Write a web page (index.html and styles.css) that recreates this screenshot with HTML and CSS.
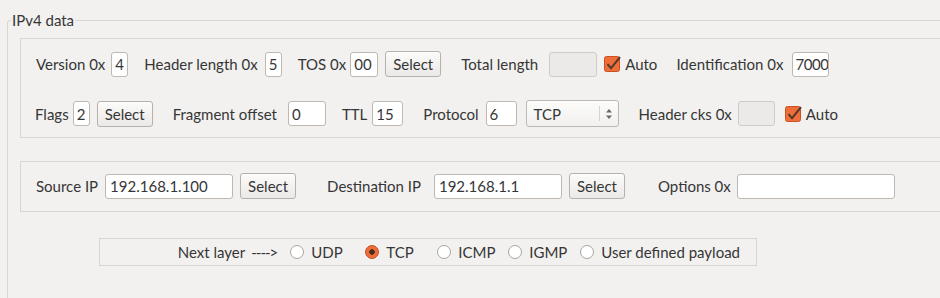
FILE: index.html
```html
<!DOCTYPE html>
<html>
<head>
<meta charset="utf-8">
<link rel="stylesheet" href="styles.css">
</head>
<body>
<div class="group">
  <span class="group-title">IPv4 data</span>

  <div class="frame frame-main">
    <div class="row row1">
      <div class="field"><span class="lbl lbl-version">Version 0x</span><input class="edit w17" value="4"></div>
      <div class="field"><span class="lbl">Header length 0x</span><input class="edit w17" value="5"></div>
      <div class="field"><span class="lbl lbl-tos">TOS 0x</span><input class="edit w28" value="00"><button class="btn">Select</button></div>
      <div class="field sp-wide"><span class="lbl lbl-total">Total length</span><input class="edit w48" disabled value="">
        <span class="check"><svg viewBox="0 0 17 16" width="17" height="16"><rect x="0.5" y="0.5" width="15" height="15" rx="2" fill="#ee6d38" stroke="#c9521f"/><path d="M3.5 8.2 L7 12.2 L16 1.2" fill="none" stroke="#55382a" stroke-width="2"/></svg>Auto</span></div>
      <div class="field sp-ident"><span class="lbl lbl-ident">Identification 0x</span><input class="edit w37 digits4" value="7000"></div>
    </div>
    <div class="row row2">
      <div class="field"><span class="lbl lbl-flags">Flags</span><input class="edit w17" value="2"><button class="btn">Select</button></div>
      <div class="field sp-wide"><span class="lbl lbl-frag">Fragment offset</span><input class="edit w38" value="0"></div>
      <div class="field"><span class="lbl lbl-ttl">TTL</span><input class="edit w31" value="15"></div>
      <div class="field sp-wide"><span class="lbl">Protocol</span><input class="edit w31" value="6">
        <div class="combo"><span class="combo-text">TCP</span><span class="combo-arrows"><svg viewBox="0 0 8 12" width="8" height="12"><path d="M4 1 L7 4.5 L1 4.5 Z M4 11 L7 7.5 L1 7.5 Z" fill="#6b6762"/></svg></span></div></div>
      <div class="field sp-wide"><span class="lbl lbl-cks">Header cks 0x</span><input class="edit w37" disabled value="">
        <span class="check sp-check"><svg viewBox="0 0 17 16" width="17" height="16"><rect x="0.5" y="0.5" width="15" height="15" rx="2" fill="#ee6d38" stroke="#c9521f"/><path d="M3.5 8.2 L7 12.2 L16 1.2" fill="none" stroke="#55382a" stroke-width="2"/></svg>Auto</span></div>
    </div>
  </div>

  <div class="frame frame-ip">
    <div class="row">
      <div class="field"><span class="lbl">Source IP</span><input class="edit w128 ip" value="192.168.1.100"><button class="btn">Select</button></div>
      <div class="field sp-ip"><span class="lbl lbl-dest">Destination IP</span><input class="edit w128 ip" value="192.168.1.1"><button class="btn">Select</button></div>
      <div class="field sp-opt"><span class="lbl lbl-opt">Options 0x</span><input class="edit w158 ip" value=""></div>
    </div>
  </div>

  <div class="next">
    <span class="next-label">Next layer</span><span class="arrow">----&gt;</span>
    <label class="radio r-first"><span class="dot"></span>UDP</label>
    <label class="radio"><span class="dot on"></span>TCP</label>
    <label class="radio r-narrow"><span class="dot"></span>ICMP</label>
    <label class="radio"><span class="dot"></span>IGMP</label>
    <label class="radio r-last"><span class="dot"></span>User defined payload</label>
  </div>
</div>
</body>
</html>
```

FILE: styles.css
```css
html, body {
  margin: 0;
  background: #f2f1f0;
  overflow: hidden;
}
body {
  font-family: Lato, "Open Sans", "DejaVu Sans", sans-serif;
  font-size: 15px;
  color: #363636;
}
.group {
  position: relative;
  margin: 20px -30px 0 7px;
  height: 300px;
  border: 1px solid #d9d6d2;
  border-radius: 3px;
  padding: 17px 0 0 12px;
}
.group-title {
  position: absolute;
  top: -11px;
  left: 3px;
  padding: 0 1px;
  line-height: 20px;
  background: #f2f1f0;
}
.frame {
  border: 1px solid #d9d6d2;
}
.frame-main {
  padding: 12px 0 10px 15px;
  display: flex;
  flex-direction: column;
  gap: 23px;
}
.frame-ip {
  margin-top: 23px;
  padding: 11px 0 12px 15px;
}
.row {
  display: flex;
  align-items: center;
  gap: 16px;
}
.row2 { margin-left: -1px; }
.field {
  display: flex;
  align-items: center;
  gap: 7px;
}
.lbl { white-space: nowrap; }
.lbl-version { margin-right: -1px; }
.lbl-tos { margin-right: -3px; }
.lbl-total { margin-right: 4px; }
.lbl-ident { margin-right: 2px; }
.lbl-flags { margin-right: -3px; }
.lbl-frag { margin-right: 4px; }
.lbl-ttl { margin-right: -2px; }
.lbl-cks { margin-right: -1px; }
.lbl-dest { margin-right: 6px; }
.lbl-opt { margin-right: -1px; }
.sp-wide { margin-left: 4px; }
.sp-ident { margin-left: 3px; }
.sp-ip { margin-left: 15px; }
.sp-opt { margin-left: 17px; }
.edit {
  box-sizing: border-box;
  height: 25px;
  margin: 0;
  border: 1px solid #bdb8b2;
  border-radius: 3px;
  background: #fff;
  padding: 0 3px;
  font: inherit;
  color: inherit;
  outline: none;
}
.edit:disabled {
  background: #ebeae8;
  border-color: #cfcbc7;
}
.edit.ip { padding-left: 4px; }
.digits4 { padding: 0 0 0 2px; letter-spacing: -0.4px; }
.w17 { width: 17px; padding: 0 3px; }
.w28 { width: 28px; }
.w31 { width: 31px; }
.w37 { width: 37px; }
.w38 { width: 38px; }
.w48 { width: 48px; }
.w128 { width: 128px; }
.w158 { width: 158px; }
.btn {
  box-sizing: border-box;
  height: 26px;
  width: 56px;
  margin: 0;
  padding: 0;
  border: 1px solid #b6b1ab;
  border-radius: 3px;
  background: linear-gradient(#fbfbfa, #ebe9e7);
  font: inherit;
  color: inherit;
  box-shadow: 0 1px 0 rgba(255,255,255,0.6) inset;
}
.check {
  display: flex;
  align-items: center;
  gap: 4px;
}
.sp-check { margin-left: 3px; }
.check svg { display: block; }
.combo {
  box-sizing: border-box;
  width: 93px;
  height: 27px;
  margin-left: 2px;
  border: 1px solid #bdb8b2;
  border-radius: 3px;
  background: linear-gradient(#fcfcfb, #f1f0ee);
  display: flex;
  align-items: center;
  padding-left: 7px;
}
.combo-text { flex: 1; }
.combo-arrows {
  width: 18px;
  height: 15px;
  border-left: 1px solid #d6d3cf;
  display: flex;
  align-items: center;
  justify-content: center;
}
.combo-arrows svg { display: block; }
.next {
  box-sizing: border-box;
  width: 658px;
  height: 28px;
  margin: 26px 0 0 79px;
  border: 1px solid #d9d6d2;
  display: flex;
  align-items: center;
  justify-content: flex-end;
  padding-right: 16px;
}
.next-label { margin-right: 6px; }
.arrow { margin-right: 13px; letter-spacing: -1px; }
.radio {
  display: flex;
  align-items: center;
  gap: 7px;
  width: 72px;
  white-space: nowrap;
}
.r-first { width: 75px; }
.r-narrow { width: 71px; }
.r-last { width: auto; }
.dot {
  box-sizing: border-box;
  flex: none;
  width: 14px;
  height: 14px;
  border-radius: 50%;
  border: 1px solid #aaa59f;
  background: #fff;
}
.dot.on {
  border-color: #c4501f;
  background: radial-gradient(circle, #4b2d20 0 2.5px, #ee6d38 3px);
}
```
